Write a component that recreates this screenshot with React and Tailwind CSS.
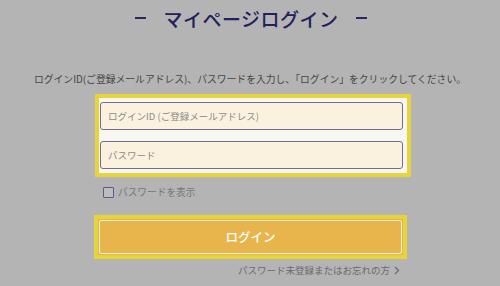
import React, { useState } from "react";

function App() {
    const [show, setShow] = useState(false)
    const [form, setForm] = useState({ email: "", password: "" })

    function handleChange(e) {
        const { name, value } = e.target
        setForm((prev) => {
            return { ...prev, [name]: value }
        })
    }

    return (
        <div className="w-[500px] h-[286px] bg-[#b4b4b4] flex flex-col overflow-hidden font-['Noto_Sans_CJK_JP',sans-serif]">
            <div className="h-[36px] flex items-center justify-center gap-[17px] pl-[2px]">
                <span className="w-[11px] h-[1.5px] bg-[#2a2860]"></span>
                <h1 className="text-[19px] font-medium text-[#23205c] tracking-[0.5px] leading-none">
                    マイページログイン
                </h1>
                <span className="w-[11px] h-[1.5px] bg-[#2a2860]"></span>
            </div>

            <p className="mt-[36px] text-center text-[9.8px] leading-[14px] text-[#454545]">
                ログインID(ご登録メールアドレス)、パスワードを入力し、「ログイン」をクリックしてください。
            </p>

            <form className="flex flex-col" onSubmit={(e) => e.preventDefault()}>
                <div className="mt-[8px] ml-[95px] w-[316px] border-4 border-[#e6d43a] bg-[#f7f6f1] pl-[1px] pr-[4px] py-[4px] flex flex-col gap-[11px]">
                    <input
                        type="email"
                        name="email"
                        placeholder="ログインID (ご登録メールアドレス)"
                        className="h-[28px] w-full bg-[#faf2df] border-[1.5px] border-[#6f6d93] rounded-[3px] px-[7px] text-[9.5px] text-[#333] placeholder:text-[#8a8a8a] focus:outline-none"
                        value={form.email}
                        onChange={handleChange}
                    />
                    <input
                        type={show ? "text" : "password"}
                        name="password"
                        placeholder="パスワード"
                        className="h-[28px] w-full bg-[#faf2df] border-[1.5px] border-[#6f6d93] rounded-[3px] px-[7px] text-[9.5px] text-[#333] placeholder:text-[#8a8a8a] focus:outline-none"
                        value={form.password}
                        onChange={handleChange}
                    />
                </div>

                <label className="mt-[10px] ml-[103px] flex items-center gap-[4px] h-[11px] cursor-pointer">
                    <input
                        type="checkbox"
                        className="appearance-none w-[11px] h-[11px] border-[1.5px] border-[#5d5b85] rounded-[1px] bg-[#bcbcc0]"
                        checked={show}
                        onChange={() => setShow(!show)}
                    />
                    <span className="text-[9.7px] text-[#767676] leading-none">パスワードを表示</span>
                </label>

                <button
                    type="submit"
                    className="mt-[17px] ml-[94px] w-[313px] h-[44px] border-4 border-[#e6d43a] bg-[#e8b54d] p-[1px]"
                >
                    <div className="h-full w-full border-[1.5px] border-[#fbf3dc] rounded-[2px] flex items-center justify-center text-white text-[12.5px] font-medium">
                        ログイン
                    </div>
                </button>

                <div className="mt-[4px] ml-[94px] w-[313px] pr-[7px] flex justify-end">
                    <a href="#" className="text-[9.5px] leading-[14px] text-[#6a6a6a] flex items-center gap-[4px]">
                        パスワード未登録またはお忘れの方
                        <svg width="6" height="9" viewBox="0 0 6 9" fill="none" stroke="#6a6a6a" strokeWidth="1.2">
                            <path d="M1 1l3.5 3.5L1 8" />
                        </svg>
                    </a>
                </div>
            </form>
        </div>
    );
}

export default App;
